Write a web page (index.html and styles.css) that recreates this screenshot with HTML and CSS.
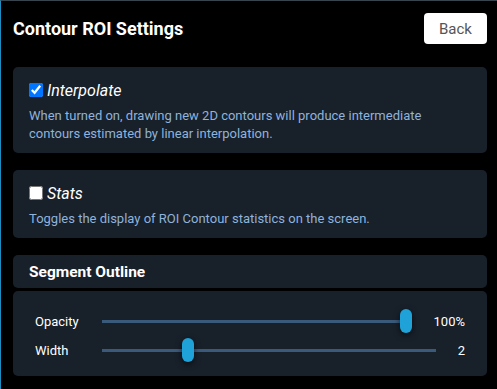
FILE: index.html
```html
<!DOCTYPE html>
<html lang="en">
<head>
    <meta charset="UTF-8">
    <title>Contour ROI Settings</title>
    <link rel="stylesheet" href="styles.css">
</head>
<body>
    <header class="panel-header">
        <h1>Contour ROI Settings</h1>
        <button class="back-btn">Back</button>
    </header>

    <div class="card">
        <label class="card-title">
            <input type="checkbox" checked>
            <span>Interpolate</span>
        </label>
        <p class="card-desc">When turned on, drawing new 2D contours will produce intermediate contours estimated by linear interpolation.</p>
    </div>

    <div class="card">
        <label class="card-title">
            <input type="checkbox">
            <span>Stats</span>
        </label>
        <p class="card-desc">Toggles the display of ROI Contour statistics on the screen.</p>
    </div>

    <div class="section-header">Segment Outline</div>
    <div class="slider-panel">
        <div class="slider-row">
            <span class="slider-label">Opacity</span>
            <input type="range" min="0" max="1" step="0.01" value="1">
            <span class="slider-value">100%</span>
        </div>
        <div class="slider-row">
            <span class="slider-label">Width</span>
            <input type="range" min="1" max="5" step="1" value="2">
            <span class="slider-value">2</span>
        </div>
    </div>
</body>
</html>
```

FILE: styles.css
```css
:root {
    --card-bg: #18202a;
    --desc-color: #8fb3dc;
    --accent: #1fa2d8;
    --track: #3a5a7c;
}

* {
    box-sizing: border-box;
}

body {
    font-family: Roboto, "Liberation Sans", sans-serif;
    background: #000;
    color: #fff;
    margin: 0;
    height: 389px;
    padding: 0 10px 0 12px;
    border-left: 1px solid #1b8fc2;
    border-top: 1px solid #38444e;
}

.panel-header {
    display: flex;
    align-items: center;
    justify-content: space-between;
    padding-top: 12px;
    margin-bottom: 23px;
}

h1 {
    margin: 0;
    font-size: 18px;
    font-weight: 700;
}

.back-btn {
    width: 63px;
    height: 31px;
    background: #fff;
    border: none;
    border-radius: 4px;
    font-family: inherit;
    font-size: 15px;
    color: #555;
    padding: 0;
}

.card {
    background: var(--card-bg);
    border-radius: 5px;
    padding: 14px 16px 10px 16px;
    margin-bottom: 17px;
}

.card-title {
    display: flex;
    align-items: center;
    height: 18px;
    font-size: 16px;
    font-style: italic;
}

.card-title input {
    width: 14px;
    height: 14px;
    margin: 0 4px 0 0;
}

.card-desc {
    margin: 8px 0 0 0;
    font-size: 13px;
    line-height: 18px;
    color: var(--desc-color);
}

.section-header {
    background: var(--card-bg);
    border-radius: 5px;
    height: 33px;
    display: flex;
    align-items: center;
    padding-left: 16px;
    font-size: 15.5px;
    font-weight: 700;
    margin-bottom: 3px;
}

.slider-panel {
    background: var(--card-bg);
    border-radius: 5px;
    padding: 18px 22px 14px 22px;
    display: flex;
    flex-direction: column;
    gap: 5px;
}

.slider-row {
    display: flex;
    align-items: center;
    height: 24px;
    font-size: 13px;
}

.slider-label {
    width: 67px;
}

.slider-value {
    margin-left: 22px;
}

input[type="range"] {
    -webkit-appearance: none;
    appearance: none;
    flex: 1;
    height: 24px;
    margin: 0;
    background: transparent;
}

input[type="range"]::-webkit-slider-runnable-track {
    height: 3px;
    background: var(--track);
}

input[type="range"]::-webkit-slider-thumb {
    -webkit-appearance: none;
    width: 12px;
    height: 24px;
    margin-top: -10.5px;
    border-radius: 6px;
    background: var(--accent);
    box-shadow: 0 2px 6px rgba(0, 0, 0, 0.6);
}
```
